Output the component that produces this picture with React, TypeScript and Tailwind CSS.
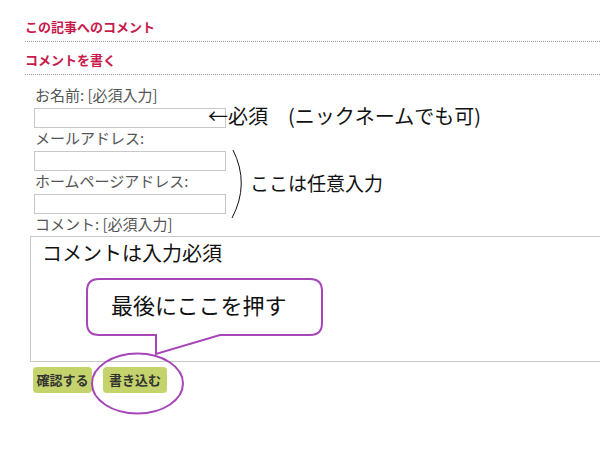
import React from 'react';

const FONT = { fontFamily: '"Noto Sans CJK JP", "Liberation Sans", sans-serif' };

const PURPLE = '#a646b8';

function Field({ label }: { label: string }) {
  return (
    <div>
      <div className="text-[15px] leading-[18px] text-[#555] mt-[1px] mb-[4px] pl-[1px]">{label}</div>
      <div className="w-[192px] h-[20px] border border-[#c8c8c8] bg-white" />
    </div>
  );
}

export default function App() {
  return (
    <div className="relative w-[600px] h-[450px] overflow-hidden bg-white" style={FONT}>
      <div className="pl-[25px] pt-[18px]">
        <h2 className="text-[13px] leading-[18px] font-bold text-[#c81a4c] pb-[5px] border-b border-dotted border-[#9a9a9a]">
          この記事へのコメント
        </h2>
        <h2 className="text-[13px] leading-[18px] font-bold text-[#c81a4c] pt-[9px] pb-[5px] border-b border-dotted border-[#9a9a9a]">
          コメントを書く
        </h2>
      </div>

      <div className="pl-[34px] pt-[10px]">
        <Field label="お名前: [必須入力]" />
        <Field label="メールアドレス:" />
        <Field label="ホームページアドレス:" />
        <div className="text-[15px] leading-[18px] text-[#555] mt-[1px] pl-[1px]">コメント: [必須入力]</div>
      </div>

      <div className="ml-[30px] mt-[3px] w-[600px] h-[126px] border border-[#c8c8c8] bg-white px-[11px] pt-[3px]">
        <div className="text-[20px] leading-[26px] text-[#111]">コメントは入力必須</div>
      </div>

      <div className="flex gap-[11px] ml-[33px] mt-[5px]">
        <button className="w-[59px] h-[26px] rounded-[4px] bg-[#c4d36c] text-[13px] font-bold text-[#333]">確認する</button>
        <button className="w-[64px] h-[26px] rounded-[4px] bg-[#c4d36c] text-[13px] font-bold text-[#333]">書き込む</button>
      </div>

      {/* annotations */}
      <div className="absolute left-[208px] top-[103px] text-[20px] leading-[26px] text-[#111] whitespace-pre">
        ←必須　(ニックネームでも可)
      </div>
      <div className="absolute left-[250px] top-[170px] text-[19px] leading-[26px] text-[#111]">ここは任意入力</div>

      <svg className="absolute left-0 top-0 pointer-events-none" width="600" height="450" viewBox="0 0 600 450">
        <path d="M233 150 Q 250 184 232 218" fill="none" stroke="#111" strokeWidth="1" />
        <path
          d="M99 279 H310 Q322 279 322 291 V323 Q322 335 310 335 H220 L156 354 V335 H99 Q87 335 87 323 V291 Q87 279 99 279 Z"
          fill="white"
          stroke={PURPLE}
          strokeWidth="2"
        />
        <ellipse cx="137.5" cy="383.5" rx="45.5" ry="30" fill="none" stroke={PURPLE} strokeWidth="2" />
      </svg>
      <div className="absolute left-[111px] top-[289px] text-[22px] leading-[30px] text-[#111]">最後にここを押す</div>
    </div>
  );
}
